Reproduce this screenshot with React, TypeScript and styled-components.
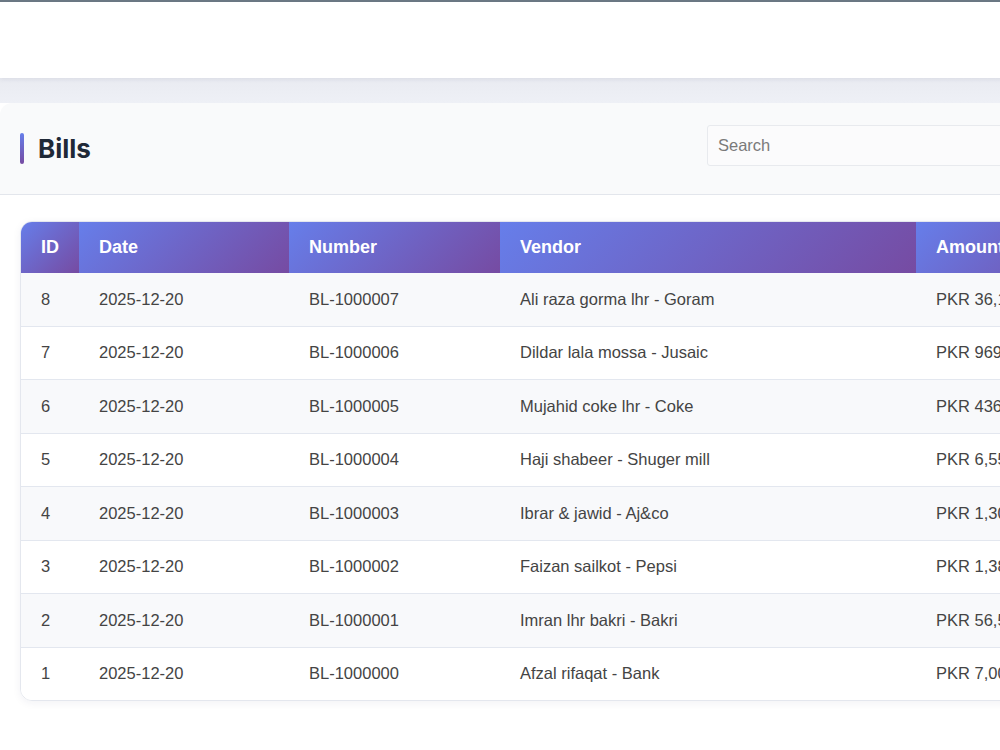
import React from 'react';
import styled, { createGlobalStyle } from 'styled-components';

const GlobalStyle = createGlobalStyle`
  html, body {
    margin: 0;
    padding: 0;
    background: #fff;
    overflow: hidden;
  }
  body {
    font-family: 'Liberation Sans', Arial, sans-serif;
  }
`;

const Page = styled.div`
  width: 1300px;
  min-height: 750px;
  border-top: 2px solid #6b7884;
  background: #fff;
`;

const TopBar = styled.header`
  height: 76px;
  background: #fff;
  box-shadow: 0 2px 4px rgba(30, 40, 80, 0.06);
  position: relative;
  z-index: 1;
`;

const Main = styled.main`
  background: linear-gradient(180deg, #e9ebf1 0px, #eef0f6 25px, #fff 25px);
  padding-top: 25px;
`;

const HeaderCard = styled.section`
  display: flex;
  align-items: center;
  justify-content: space-between;
  height: 91px;
  background: #f9fafb;
  border-top-left-radius: 12px;
  border-bottom: 1px solid #e3e6ec;
  padding: 0 0 0 20px;
`;

const Title = styled.h1`
  display: flex;
  align-items: center;
  gap: 14px;
  margin: 0;
  font-family: Inter, 'Liberation Sans', sans-serif;
  font-size: 26px;
  font-weight: 700;
  color: #1f2937;

  &::before {
    content: '';
    width: 4px;
    height: 31px;
    border-radius: 2px;
    background: linear-gradient(180deg, #667eea, #764ba2);
  }
`;

const SearchInput = styled.input`
  width: 593px;
  height: 41px;
  box-sizing: border-box;
  margin: -7px 0 0 0;
  padding: 0 10px;
  border: 1px solid #e8eaee;
  border-radius: 3px;
  background: #fbfbfc;
  font-family: 'Liberation Sans', Arial, sans-serif;
  font-size: 16.5px;
  color: #333;
  outline: none;

  &::placeholder {
    color: #7a7a7a;
  }
`;

const TableWrap = styled.div`
  margin: 26px 0 0 20px;
  border: 1px solid #e4e7ee;
  border-radius: 12px;
  overflow: hidden;
  box-shadow: 0 2px 8px rgba(30, 40, 80, 0.06);
  width: fit-content;
`;

const Table = styled.table`
  border-collapse: collapse;
  font-size: 16.5px;
`;

const Th = styled.th<{ w: number }>`
  width: ${p => p.w}px;
  box-sizing: border-box;
  height: 51px;
  padding: 0 20px;
  text-align: left;
  font-size: 18px;
  font-weight: 700;
  color: #fff;
  background: linear-gradient(135deg, #667eea 0%, #764ba2 100%);
`;

const Row = styled.tr<{ shaded: boolean }>`
  background: ${p => (p.shaded ? '#f8f9fb' : '#fff')};
`;

const Td = styled.td`
  height: 52.5px;
  padding: 0 20px;
  color: #444;
  white-space: nowrap;
  border-bottom: 1px solid #e3e7ef;

  tr:last-child > & {
    border-bottom: none;
  }
`;

const columns = [
  { label: 'ID', w: 58 },
  { label: 'Date', w: 210 },
  { label: 'Number', w: 211 },
  { label: 'Vendor', w: 416 },
  { label: 'Amount', w: 200 },
];

const bills = [
  { id: 8, number: 'BL-1000007', vendor: 'Ali raza gorma lhr - Goram', amount: 'PKR 36,150.00' },
  { id: 7, number: 'BL-1000006', vendor: 'Dildar lala mossa - Jusaic', amount: 'PKR 969,000.00' },
  { id: 6, number: 'BL-1000005', vendor: 'Mujahid coke lhr - Coke', amount: 'PKR 436,800.00' },
  { id: 5, number: 'BL-1000004', vendor: 'Haji shabeer - Shuger mill', amount: 'PKR 6,550,000.00' },
  { id: 4, number: 'BL-1000003', vendor: 'Ibrar & jawid - Aj&co', amount: 'PKR 1,300,000.00' },
  { id: 3, number: 'BL-1000002', vendor: 'Faizan sailkot - Pepsi', amount: 'PKR 1,380,000.00' },
  { id: 2, number: 'BL-1000001', vendor: 'Imran lhr bakri - Bakri', amount: 'PKR 56,500.00' },
  { id: 1, number: 'BL-1000000', vendor: 'Afzal rifaqat - Bank', amount: 'PKR 7,000,000.00' },
];

const App = () => {
  return (
    <>
      <GlobalStyle />
      <Page>
        <TopBar />
        <Main>
          <HeaderCard>
            <Title>Bills</Title>
            <SearchInput type="text" placeholder="Search" />
          </HeaderCard>
          <TableWrap>
            <Table>
              <thead>
                <tr>
                  {columns.map(col => (
                    <Th key={col.label} w={col.w}>
                      {col.label}
                    </Th>
                  ))}
                </tr>
              </thead>
              <tbody>
                {bills.map((bill, index) => (
                  <Row key={bill.id} shaded={index % 2 === 0}>
                    <Td>{bill.id}</Td>
                    <Td>2025-12-20</Td>
                    <Td>{bill.number}</Td>
                    <Td>{bill.vendor}</Td>
                    <Td>{bill.amount}</Td>
                  </Row>
                ))}
              </tbody>
            </Table>
          </TableWrap>
        </Main>
      </Page>
    </>
  );
};

export default App;
